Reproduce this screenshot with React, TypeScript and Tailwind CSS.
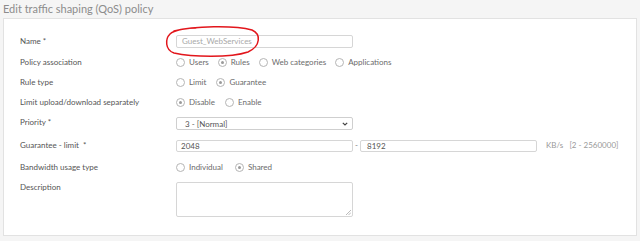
import React from "react";

function Radio({ label, checked }: { label: string; checked?: boolean }) {
  return (
    <div className="flex items-center gap-[4px]">
      <span className="w-[9px] h-[9px] rounded-full border border-[#b5b5b5] bg-white flex items-center justify-center">
        {checked && <span className="w-[3px] h-[3px] rounded-full bg-[#9a9a9a]" />}
      </span>
      <span className="text-[8px] leading-[10px] text-[#6b6b6b]">{label}</span>
    </div>
  );
}

function Label({ children, pt = "pt-0" }: { children: React.ReactNode; pt?: string }) {
  return <div className={`w-[156px] shrink-0 text-[8px] leading-[10px] text-[#555] ${pt}`}>{children}</div>;
}

export default function App() {
  return (
    <div className="relative w-[640px] h-[241px] bg-[#f5f5f5] overflow-hidden" style={{ fontFamily: "Lato, 'Noto Sans', sans-serif" }}>
      <div className="h-[18px] pl-[3px] pt-[2px] text-[11px] leading-[14px] text-[#8c8c8c]">Edit traffic shaping (QoS) policy</div>
      <div className="mx-[3px] h-[218px] bg-white border border-[#e2e2e2] pl-[16px] pt-[16px] flex flex-col">
        <div className="flex items-start h-[13px]">
          <Label pt="pt-[1px]">Name *</Label>
          <div className="w-[177px] h-[13px] border border-[#d6d6d6] rounded-[2px] px-[5px] text-[8px] leading-[11px] text-[#a8a8a8]">Guest_WebServices</div>
        </div>
        <div className="flex items-center h-[10px] mt-[9px]">
          <Label>Policy association</Label>
          <div className="flex gap-[9px]">
            <Radio label="Users" />
            <Radio label="Rules" checked />
            <Radio label="Web categories" />
            <Radio label="Applications" />
          </div>
        </div>
        <div className="flex items-center h-[10px] mt-[10px]">
          <Label>Rule type</Label>
          <div className="flex gap-[10px]">
            <Radio label="Limit" />
            <Radio label="Guarantee" checked />
          </div>
        </div>
        <div className="flex items-center h-[10px] mt-[10px]">
          <Label>Limit upload/download separately</Label>
          <div className="flex gap-[10px]">
            <Radio label="Disable" checked />
            <Radio label="Enable" />
          </div>
        </div>
        <div className="flex items-start h-[13px] mt-[10px]">
          <Label>Priority *</Label>
          <div className="w-[177px] h-[13px] border border-[#cfcfcf] rounded-[2px] pl-[8px] pr-[4px] flex items-center justify-between text-[8px] text-[#555]">
            <span>3 - [Normal]</span>
            <svg width="6" height="4" viewBox="0 0 6 4"><path d="M0.8 0.8 L3 3 L5.2 0.8" fill="none" stroke="#444" strokeWidth="1.2" /></svg>
          </div>
        </div>
        <div className="flex items-start h-[12px] mt-[10px]">
          <Label>Guarantee - limit &nbsp;*</Label>
          <div className="w-[177px] h-[12px] border border-[#d6d6d6] rounded-[2px] px-[4px] text-[8px] leading-[10px] text-[#555]">2048</div>
          <span className="w-[7px] text-center text-[8px] leading-[11px] text-[#777]">-</span>
          <div className="w-[177px] h-[12px] border border-[#d6d6d6] rounded-[2px] px-[6px] text-[8px] leading-[10px] text-[#555]">8192</div>
          <span className="ml-[9px] text-[8px] leading-[11px] text-[#999] whitespace-pre">KB/s   [2 - 2560000]</span>
        </div>
        <div className="flex items-center h-[10px] mt-[10px]">
          <Label>Bandwidth usage type</Label>
          <div className="flex gap-[12px]">
            <Radio label="Individual" />
            <Radio label="Shared" checked />
          </div>
        </div>
        <div className="flex items-start mt-[10px]">
          <Label>Description</Label>
          <div className="relative w-[177px] h-[35px] border border-[#d6d6d6] rounded-[2px]">
            <svg className="absolute right-[1px] bottom-[1px]" width="5" height="5" viewBox="0 0 5 5">
              <path d="M0 5 L5 0 M2.5 5 L5 2.5" stroke="#aaa" strokeWidth="0.8" />
            </svg>
          </div>
        </div>
      </div>
      <svg className="absolute left-[164px] top-[24px]" width="98" height="34" viewBox="0 0 98 34">
        <path
          d="M10 7 C 30 2, 70 1, 88 6 C 97 10, 97 22, 84 28 C 66 34, 28 33, 10 29 C 1 26, 1 15, 6 10 C 10 6, 22 4, 32 4"
          fill="none"
          stroke="#e2161c"
          strokeWidth="1.5"
          strokeLinecap="round"
        />
      </svg>
    </div>
  );
}
